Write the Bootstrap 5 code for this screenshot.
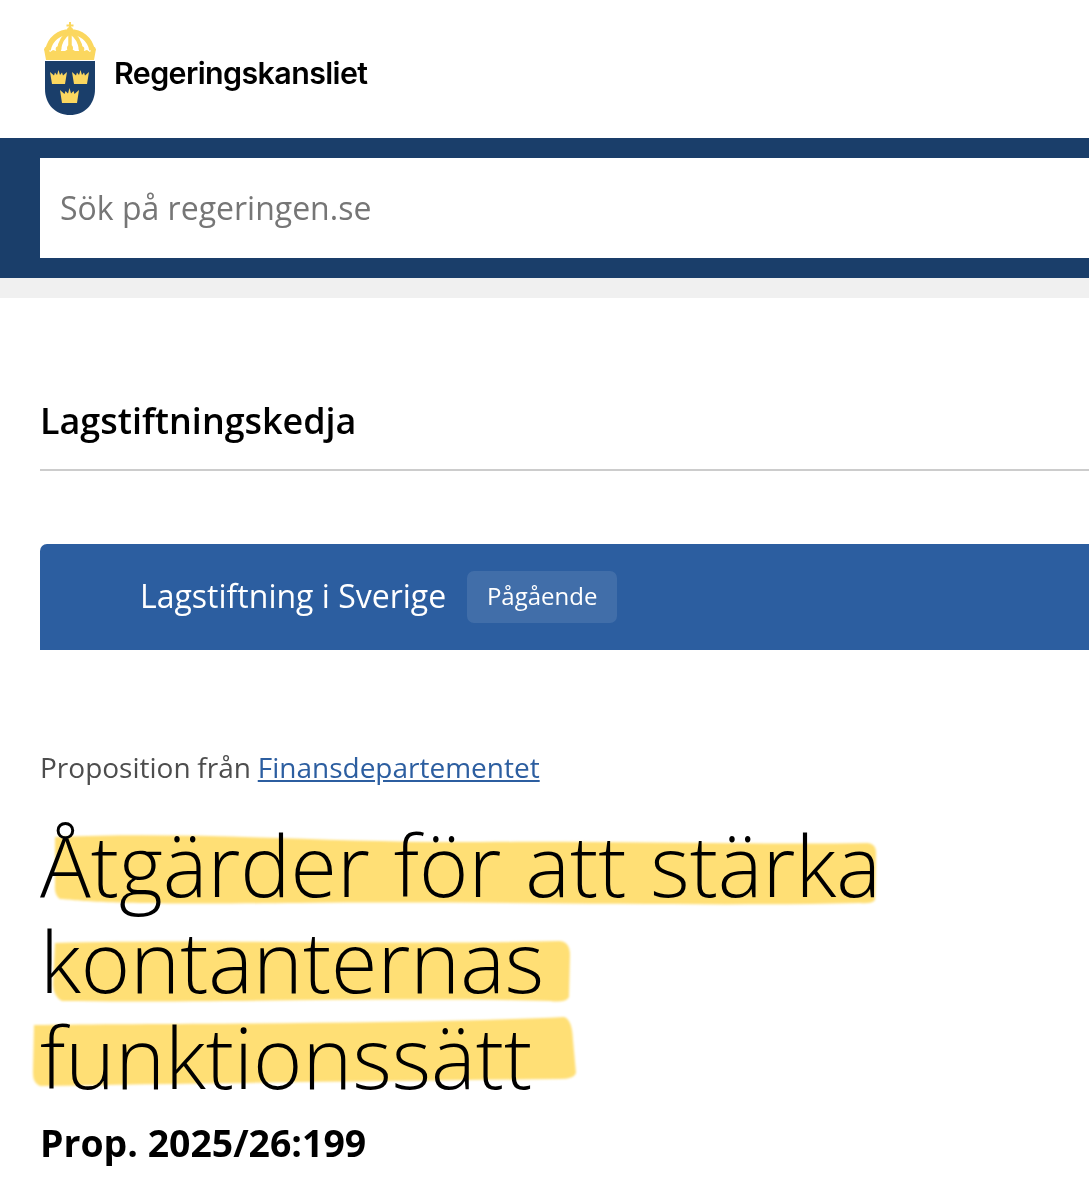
<!DOCTYPE html>
<html lang="sv">
<head>
<meta charset="utf-8">
<title>Åtgärder för att stärka kontanternas funktionssätt</title>
<link href="https://cdn.jsdelivr.net/npm/bootstrap@5.3.0/dist/css/bootstrap.min.css" rel="stylesheet">
<style>
html,body{overflow:hidden;background:#fff;}
body{font-family:"Open Sans",sans-serif;color:#000;height:1195px;}
.rk-head{height:138px;padding-left:44px;}
.rk-name{font-family:Inter,sans-serif;font-weight:600;font-size:30.4px;letter-spacing:-.6px;color:#000;margin-left:18px;margin-top:9px;line-height:1;}
.rk-search{background:#1a3e6a;padding:20px 0 20px 40px;height:140px;}
.rk-input{height:100px;background:#fff;color:#767676;font-size:32px;padding-left:20px;}
.rk-rule{height:20px;background:#f0f0f0;}
.rk-main{padding-left:40px;}
.rk-chain{font-size:35.9px;font-weight:600;line-height:46px;margin:100px 0 0;padding-bottom:25px;border-bottom:2px solid #ccc;}
.rk-banner{margin-top:73px;height:106px;background:#2c5ea0;color:#fff;border-top-left-radius:7px;padding-left:100px;gap:21px;}
.rk-banner-title{font-size:32px;font-weight:400;padding-bottom:2px;}
.rk-tag{background:rgba(255,255,255,.1);border-radius:7px;height:52px;width:150px;font-size:24px;padding-bottom:2px;}
.rk-meta{margin-top:97px;font-size:28px;line-height:40px;color:#4d4d4d;word-spacing:-.5px;}
.rk-meta a{color:#2c5ea0;}
.rk-title{position:relative;margin:30px 0 0;font-size:84.4px;font-weight:300;line-height:96px;color:#000;word-spacing:2px;}
.rk-mark{position:absolute;left:-40px;top:0;width:1089px;height:300px;mix-blend-mode:multiply;pointer-events:none;filter:blur(1px);}
.rk-prop{font-size:37.4px;font-weight:700;line-height:46px;margin-top:15px;}
</style>
</head>
<body>
<header class="rk-head d-flex align-items-center">
<svg width="52" height="94" viewBox="0 0 52 94" aria-label="Riksvapen" role="img">
<g fill="none" stroke="#fbd75f">
<path stroke-width="5.500" d="M26 10C15 10 6 17 4 28"/>
<path stroke-width="5.500" d="M26 10C37 10 46 17 48 28"/>
<path stroke-width="4" d="M26 10C21 13 16 19 15 28"/>
<path stroke-width="4" d="M26 10C31 13 36 19 37 28"/>
<path stroke-width="3.500" d="M26 9V28"/>
</g>
<g fill="#fbd75f">
<rect x="25" y="0" width="2" height="9"/><rect x="22.500" y="2.500" width="7" height="2"/>
<circle cx="26" cy="8" r="3"/>
<circle cx="3" cy="27" r="2.600"/><circle cx="14.500" cy="27" r="2.800"/><circle cx="26" cy="26" r="3"/><circle cx="37.500" cy="27" r="2.800"/><circle cx="49" cy="27" r="2.600"/>
<path d="M0 27L3 26 6 30 9 28 12 29 14.500 26 17 29 21 29 26 26 31 29 35 29 37.500 26 40 29 43 28 46 30 49 26 52 27 50 38H2Z"/>
</g>
<path fill="#1a3e6a" d="M1 39H51V67C51 83 40 93 26 93S1 83 1 67Z"/>
<g fill="#fbd75f">
<path d="M6 50l4 3.500 1-3 2 2.500 1.500-5 1.500 5 2-2.500 1 3 4-3.500-2 12H8Z"/>
<path d="M28 50l4 3.500 1-3 2 2.500 1.500-5 1.500 5 2-2.500 1 3 4-3.500-2 12H30Z"/>
<path d="M16 68l4.500 4 1-3 2.500 2.500 1.500-5.500 1.500 5.500 2.500-2.500 1 3 4.500-4-2 13H18Z"/>
</g>
</svg>
<span class="rk-name">Regeringskansliet</span>
</header>
<div class="rk-search"><div class="rk-input d-flex align-items-center">Sök på regeringen.se</div></div>
<div class="rk-rule"></div>
<main class="rk-main">
<h2 class="rk-chain">Lagstiftningskedja</h2>
<div class="rk-banner d-flex align-items-center">
<span class="rk-banner-title">Lagstiftning i Sverige</span>
<span class="rk-tag d-flex align-items-center justify-content-center">Pågående</span>
</div>
<p class="rk-meta mb-0">Proposition från <a href="#">Finansdepartementet</a></p>
<h1 class="rk-title">Åtgärder för att stärka<br>kontanternas<br>funktionssätt
<svg class="rk-mark" viewBox="0 0 1089 300" aria-hidden="true"><g fill="#ffdf75">
<path d="M55 20C200 14 330 26 480 25S760 28 868 26Q877 27 876 38L875 83Q872 87 860 86C700 90 500 84 300 86S90 84 60 82Q54 78 55 68Z"/>
<path d="M55 126C200 122 400 128 560 124Q570 125 570 138L569 180Q566 186 550 184C400 180 200 186 62 184Q54 180 53 168Z"/>
<path d="M34 208C150 206 400 208 564 200Q572 202 573 223L576 256Q574 262 560 262C400 264 200 266 40 269Q32 266 33 253Z"/>
</g></svg>
</h1>
<div class="rk-prop">Prop. 2025/26:199</div>
</main>
</body>
</html>
